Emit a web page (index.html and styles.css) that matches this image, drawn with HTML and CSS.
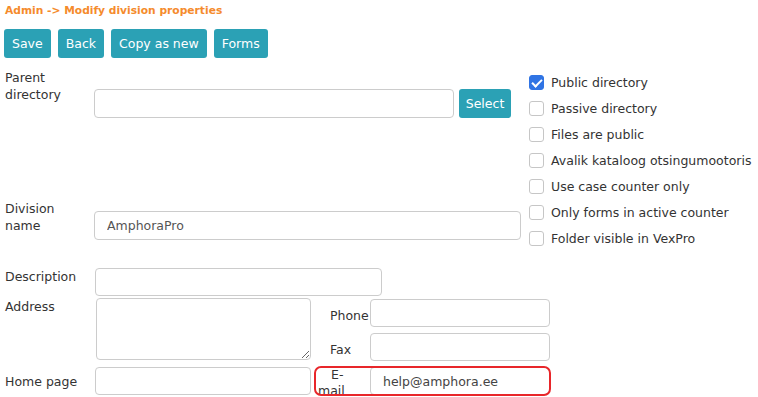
FILE: index.html
```html
<!DOCTYPE html>
<html lang="en">
<head>
  <meta charset="UTF-8">
  <title>Modify division properties</title>
  <link rel="stylesheet" href="styles.css">
</head>
<body>
  <div class="crumb">Admin -&gt; Modify division properties</div>
  <div class="toolbar">
    <button type="button" class="btn">Save</button>
    <button type="button" class="btn">Back</button>
    <button type="button" class="btn">Copy as new</button>
    <button type="button" class="btn">Forms</button>
  </div>
  <form class="main" autocomplete="off">
    <div class="top">
      <div class="left">
        <div class="parent-row">
          <label class="lbl" for="parentDir">Parent directory</label>
          <input type="text" id="parentDir" class="field parent-input">
          <button type="button" class="btn select-btn">Select</button>
        </div>
        <div class="division-row">
          <label class="lbl" for="divName">Division name</label>
          <input type="text" id="divName" class="field division-input" value="AmphoraPro">
        </div>
      </div>
      <div class="checks">
        <label class="check"><input type="checkbox" checked> Public directory</label>
        <label class="check"><input type="checkbox"> Passive directory</label>
        <label class="check"><input type="checkbox"> Files are public</label>
        <label class="check"><input type="checkbox"> Avalik kataloog otsingumootoris</label>
        <label class="check"><input type="checkbox"> Use case counter only</label>
        <label class="check"><input type="checkbox"> Only forms in active counter</label>
        <label class="check"><input type="checkbox"> Folder visible in VexPro</label>
      </div>
    </div>

    <div class="lower">
      <label class="lbl desc-lbl" for="desc">Description</label>
      <input type="text" id="desc" class="field desc-input">

      <label class="lbl addr-lbl" for="addr">Address</label>
      <textarea id="addr" class="field addr-input"></textarea>

      <label class="lbl side-lbl phone-lbl" for="phone">Phone</label>
      <input type="text" id="phone" class="field side-input phone-input">

      <label class="lbl side-lbl fax-lbl" for="fax">Fax</label>
      <input type="text" id="fax" class="field side-input fax-input">

      <label class="lbl home-lbl" for="home">Home page</label>
      <input type="text" id="home" class="field home-input">

      <div class="email">
        <label class="email-lbl" for="email"><span>E-</span><span class="mail">mail</span></label>
        <input type="text" id="email" class="field side-input" value="help@amphora.ee">
      </div>
    </div>
  </form>
</body>
</html>
```

FILE: styles.css
```css
body {
  margin: 0;
  padding: 4px 0 0 4px;
  background: #fff;
  color: #333;
  font-family: 'DejaVu Sans', Verdana, sans-serif;
  font-size: 12.5px;
  overflow: hidden;
}
.crumb {
  color: #f58b2c;
  font-weight: bold;
  font-size: 10.7px;
  line-height: 14px;
  padding-left: 1px;
}
.toolbar {
  display: flex;
  gap: 7px;
  margin-top: 11px;
}
.btn {
  background: #2ba1b5;
  color: #fff;
  border: none;
  border-radius: 3px;
  height: 29px;
  padding: 0 8px;
  font-family: inherit;
  font-size: 12.5px;
  cursor: pointer;
}
.btn:hover {
  background: #238b9d;
}
.main {
  margin: 8px 0 0 1px;
}
.top {
  display: flex;
}
.left {
  width: 516px;
}
.lbl {
  display: block;
  line-height: 17px;
}
.field {
  box-sizing: border-box;
  border: 1px solid #cccccc;
  border-radius: 4px;
  background: #fff;
  font-family: inherit;
  font-size: 12.5px;
  color: #555;
  padding: 0 12px;
  outline: none;
  margin: 0;
}
.field:focus {
  border-color: #66afe9;
}
.parent-row {
  display: flex;
  height: 134px;
}
.parent-row .lbl,
.division-row .lbl {
  width: 76px;
  margin-right: 13px;
}
.parent-row .lbl {
  padding-top: 3px;
}
.parent-input {
  width: 360px;
  height: 29px;
  margin-top: 23px;
}
.select-btn {
  width: 52px;
  margin: 23px 0 0 5px;
  padding: 0;
}
.division-row {
  display: flex;
}
.division-input {
  width: 427px;
  height: 29px;
  margin-top: 11px;
}
.checks {
  margin-left: 8px;
  padding-top: 3px;
}
.check {
  display: flex;
  align-items: center;
  height: 26px;
  gap: 7px;
  color: #333;
}
.check input {
  appearance: none;
  -webkit-appearance: none;
  width: 15px;
  height: 15px;
  margin: 0;
  border: 1px solid #c6c6c6;
  border-radius: 3px;
  background: #fff;
  position: relative;
}
.check input:checked {
  background: #3074e4;
  border-color: #3074e4;
}
.check input:checked::after {
  content: "";
  position: absolute;
  left: 4px;
  top: 1px;
  width: 4px;
  height: 8px;
  border: solid #fff;
  border-width: 0 2px 2px 0;
  transform: rotate(45deg);
}
.lower {
  display: grid;
  grid-template-columns: 90px 216px 59px 180px;
  grid-template-rows: 30px 34px 34px 30px;
  margin-top: 17px;
}
.desc-lbl, .addr-lbl {
  align-self: start;
}
.desc-input {
  grid-column: 2 / 5;
  justify-self: start;
  width: 287px;
  height: 28px;
}
.addr-lbl {
  grid-row: 2;
  grid-column: 1;
}
.addr-input {
  grid-row: 2 / 4;
  grid-column: 2;
  align-self: start;
  width: 215px;
  height: 62px;
  margin-left: 1px;
  resize: both;
}
.side-lbl {
  grid-column: 3;
  align-self: center;
  padding-left: 19px;
}
.phone-lbl {
  grid-row: 2;
}
.fax-lbl {
  grid-row: 3;
}
.side-input {
  grid-column: 4;
  width: 180px;
  height: 28px;
}
.phone-input {
  grid-row: 2;
  margin-top: 1px;
}
.fax-input {
  grid-row: 3;
  margin-top: 1px;
}
.home-lbl {
  grid-row: 4;
  grid-column: 1;
  align-self: center;
}
.home-input {
  grid-row: 4;
  grid-column: 2;
  width: 216px;
  height: 28px;
  margin-top: 1px;
}
.email {
  grid-row: 4;
  grid-column: 3 / 5;
  display: flex;
  align-items: center;
  position: relative;
}
.email::after {
  content: "";
  position: absolute;
  left: 3px;
  right: -1px;
  top: 0;
  bottom: 0;
  border: 2px solid #e8262a;
  border-radius: 7px;
  pointer-events: none;
}
.email-lbl {
  width: 59px;
  line-height: 16px;
  padding-top: 4px;
}
.email-lbl span {
  display: block;
  padding-left: 20px;
}
.email-lbl .mail {
  padding-left: 7px;
}
.email .field {
  color: #444;
}
```
